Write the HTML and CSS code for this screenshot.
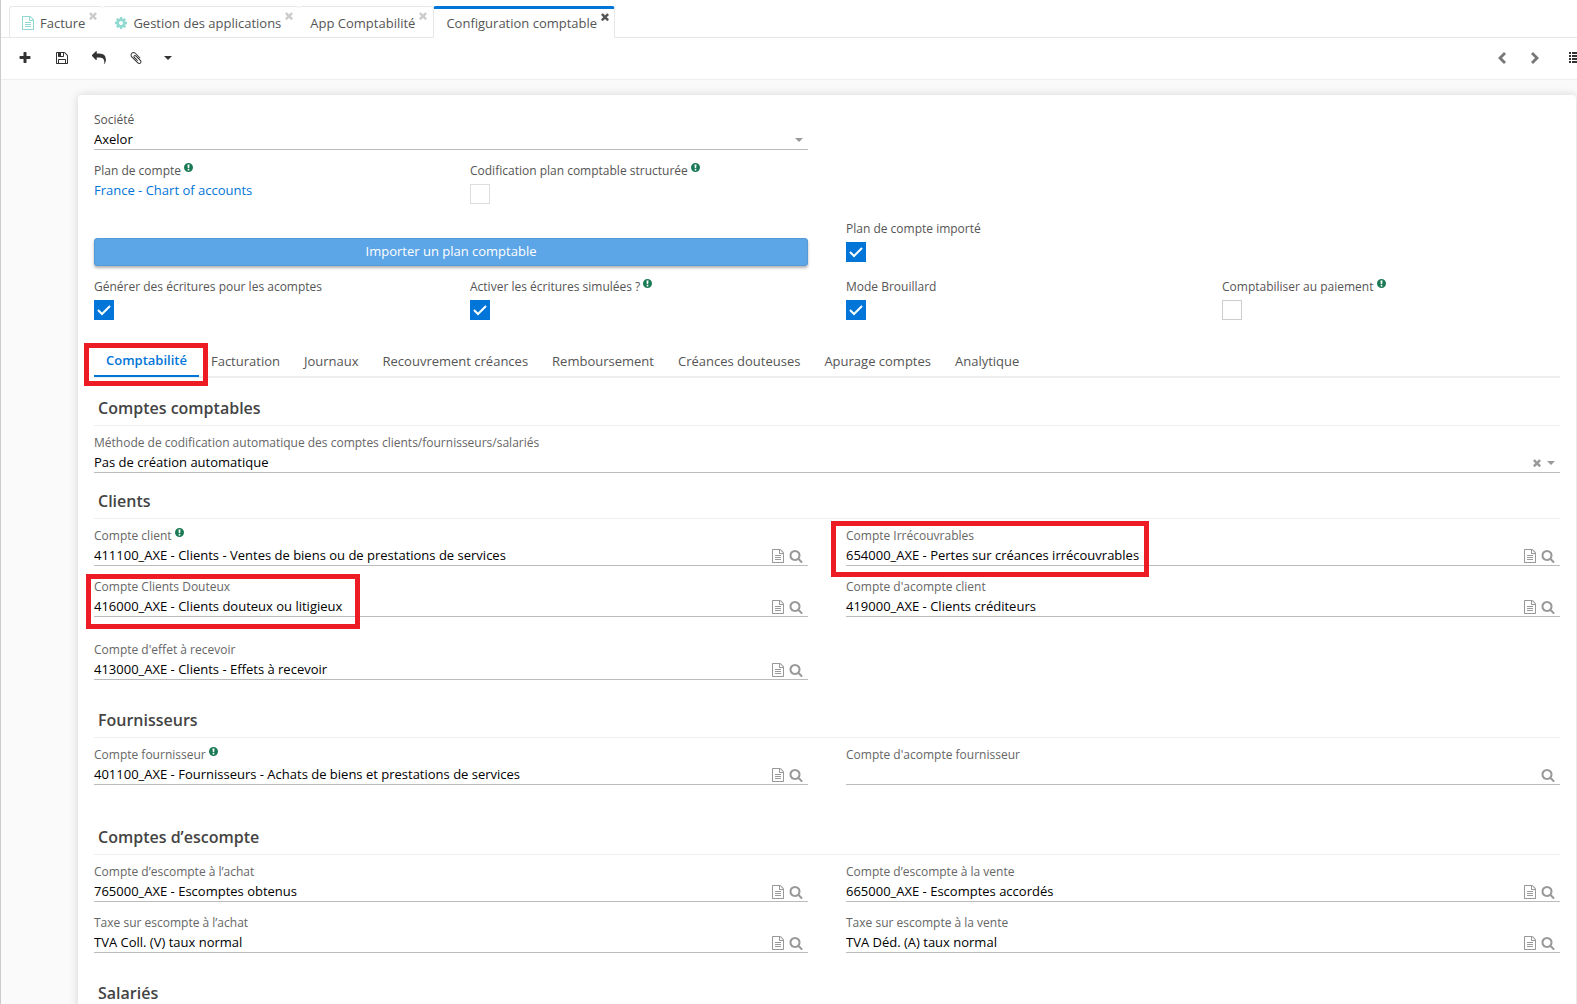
FILE: index.html
```html
<!DOCTYPE html>
<html lang="fr">
<head>
<meta charset="utf-8">
<title>Configuration comptable</title>
<link rel="stylesheet" href="styles.css">
</head>
<body>
<svg class="sprite" aria-hidden="true">
  <symbol id="plus" viewBox="0 0 1792 1792"><path d="M1600 736v192q0 40-28 68t-68 28h-416v416q0 40-28 68t-68 28h-192q-40 0-68-28t-28-68v-416h-416q-40 0-68-28t-28-68v-192q0-40 28-68t68-28h416v-416q0-40 28-68t68-28h192q40 0 68 28t28 68v416h416q40 0 68 28t28 68z"/></symbol>
  <symbol id="save" viewBox="0 0 1792 1792"><path d="M512 1536h768v-384h-768v384zm896 0h128v-896q0-14-10-38.500t-20-34.500l-281-281q-10-10-34-20t-39-10v416q0 40-28 68t-68 28h-576q-40 0-68-28t-28-68v-416h-128v1280h128v-416q0-40 28-68t68-28h832q40 0 68 28t28 68v416zm-384-928v-320q0-13-9.500-22.500t-22.500-9.500h-192q-13 0-22.500 9.500t-9.500 22.500v320q0 13 9.500 22.500t22.500 9.500h192q13 0 22.500-9.500t9.500-22.500zm640 32v928q0 40-28 68t-68 28h-1344q-40 0-68-28t-28-68v-1344q0-40 28-68t68-28h928q40 0 88 20t76 48l280 280q28 28 48 76t20 88z"/></symbol>
  <symbol id="reply" viewBox="0 0 1792 1792"><path d="M1792 1120q0 166-127 451-3 7-10.500 24t-13.500 30-13 22q-12 17-28 17-15 0-23.500-10t-8.500-25q0-9 2.500-26.500t2.500-23.500q5-68 5-123 0-112-19.500-200.500t-54-153.500-89-112-118-78.500-140-44.500-156.500-20.500-170-6.500h-224v256q0 26-19 45t-45 19-45-19l-512-512q-19-19-19-45t19-45l512-512q19-19 45-19t45 19 19 45v256h224q713 0 875 403 53 134 53 333z"/></symbol>
  <symbol id="clip" viewBox="0 0 1792 1792"><path d="M1596 1385q0 117-79 196t-196 79q-135 0-235-100l-777-776q-113-115-113-271 0-159 110-270t269-111q158 0 273 113l605 606q10 10 10 22 0 16-30.500 46.500t-46.500 30.500q-13 0-23-10l-606-607q-79-77-181-77-106 0-179 75t-73 181q0 105 76 181l776 777q63 63 145 63 64 0 106-42t42-106q0-82-63-145l-581-581q-26-24-60-24-29 0-48 19t-19 48q0 32 25 59l410 410q10 10 10 22 0 16-31 47t-47 31q-12 0-22-10l-410-410q-63-61-63-149 0-82 57-139t139-57q88 0 149 63l581 581q100 98 100 235z"/></symbol>
  <symbol id="file" viewBox="0 0 1792 1792"><path d="M1596 380q28 28 48 76t20 88v1152q0 40-28 68t-68 28h-1344q-40 0-68-28t-28-68v-1600q0-40 28-68t68-28h896q40 0 88 20t76 48zm-444-244v376h376q-10-29-22-41l-313-313q-12-12-41-22zm384 1528v-1024h-416q-40 0-68-28t-28-68v-416h-768v1536h1280zm-1024-864q0-14 9-23t23-9h704q14 0 23 9t9 23v64q0 14-9 23t-23 9h-704q-14 0-23-9t-9-23v-64zm736 224q14 0 23 9t9 23v64q0 14-9 23t-23 9h-704q-14 0-23-9t-9-23v-64q0-14 9-23t23-9h704zm0 256q14 0 23 9t9 23v64q0 14-9 23t-23 9h-704q-14 0-23-9t-9-23v-64q0-14 9-23t23-9h704z"/></symbol>
  <symbol id="search" viewBox="0 0 1792 1792"><path d="M1216 832q0-185-131.500-316.500t-316.500-131.500-316.500 131.500-131.500 316.500 131.500 316.500 316.500 131.500 316.500-131.500 131.500-316.500zm512 832q0 52-38 90t-90 38q-54 0-90-38l-343-342q-179 124-399 124-143 0-273.500-55.500t-225-150-150-225-55.500-273.500 55.500-273.500 150-225 225-150 273.500-55.500 273.500 55.500 225 150 150 225 55.500 273.500q0 220-124 399l343 343q37 37 37 90z"/></symbol>
  <symbol id="cog" viewBox="0 0 1792 1792"><path d="M1152 896q0-106-75-181t-181-75-181 75-75 181 75 181 181 75 181-75 75-181zm512-109v222q0 12-8 23t-20 13l-185 28q-19 54-39 91 35 50 107 138 10 12 10 25t-9 23q-27 37-99 108t-94 71q-12 0-26-9l-138-108q-44 23-91 38-16 136-29 186-7 28-36 28h-222q-14 0-24.500-8.500t-11.500-21.500l-28-184q-49-16-90-37l-141 107q-10 9-25 9-14 0-25-11-126-114-165-168-7-10-7-23 0-12 8-23 15-21 51-66.500t54-70.500q-27-50-41-99l-183-27q-13-2-21-12.500t-8-23.500v-222q0-12 8-23t19-13l186-28q14-46 39-92-40-57-107-138-10-12-10-24 0-10 9-23 26-36 98.500-107.500t94.500-71.500q13 0 26 10l138 107q44-23 91-38 16-136 29-186 7-28 36-28h222q14 0 24.500 8.500t11.500 21.500l28 184q49 16 90 37l142-107q9-9 24-9 13 0 25 10 129 119 165 170 7 8 7 22 0 12-8 23-15 21-51 66.500t-54 70.500q26 50 41 98l183 28q13 2 21 12.500t8 23.500z"/></symbol>
  <symbol id="times" viewBox="302 302 1188 1252"><path d="M1490 1322q0 40-28 68l-136 136q-28 28-68 28t-68-28l-294-294-294 294q-28 28-68 28t-68-28l-136-136q-28-28-28-68t28-68l294-294-294-294q-28-28-28-68t28-68l136-136q28-28 68-28t68 28l294 294 294-294q28-28 68-28t68 28l136 136q28 28 28 68t-28 68l-294 294 294 294q28 28 28 68z"/></symbol>
  <symbol id="caret" viewBox="0 0 8 4"><path d="M0 0h8L4 4z"/></symbol>
  <symbol id="help" viewBox="0 0 18 18"><path fill-rule="evenodd" d="M9 0a9 9 0 1 1 0 18A9 9 0 0 1 9 0zM7 3l.6 7.400h2.800L11 3zM7.400 12v3h3.200v-3z"/></symbol>
  <symbol id="prev" viewBox="0 0 8 12"><path d="M6 0l2 2-4 4 4 4-2 2-6-6z"/></symbol>
  <symbol id="next" viewBox="0 0 8 12"><path d="M2 0L0 2l4 4-4 4 2 2 6-6z"/></symbol>
  <symbol id="list" viewBox="0 0 14 12"><path d="M0 0h2v2H0zM3 0h11v2H3zM0 3h2v2H0zM3 3h11v2H3zM0 6h2v2H0zM3 6h11v2H3zM0 9h2v2H0zM3 9h11v2H3z"/></symbol>
</svg>

<div class="app">
  <nav class="view-tabs" aria-label="Vues ouvertes">
    <div class="view-tab"><svg class="icon teal"><use href="#file"/></svg><a href="#">Facture</a><button class="close" type="button" aria-label="Fermer"><svg><use href="#times"/></svg></button></div>
    <div class="view-tab"><svg class="icon teal"><use href="#cog"/></svg><a href="#">Gestion des applications</a><button class="close" type="button" aria-label="Fermer"><svg><use href="#times"/></svg></button></div>
    <div class="view-tab"><a href="#">App Comptabilité</a><button class="close" type="button" aria-label="Fermer"><svg><use href="#times"/></svg></button></div>
    <div class="view-tab current"><a href="#">Configuration comptable</a><button class="close" type="button" aria-label="Fermer"><svg><use href="#times"/></svg></button></div>
  </nav>

  <div class="toolbar">
    <button type="button" aria-label="Nouveau"><svg class="icon"><use href="#plus"/></svg></button>
    <button type="button" aria-label="Enregistrer"><svg class="icon"><use href="#save"/></svg></button>
    <button type="button" aria-label="Annuler"><svg class="icon"><use href="#reply"/></svg></button>
    <button type="button" aria-label="Pièces jointes"><svg class="icon"><use href="#clip"/></svg></button>
    <button class="more" type="button" aria-label="Plus d'actions"><svg class="caret"><use href="#caret"/></svg></button>
    <div class="pager">
      <button type="button" aria-label="Précédent"><svg class="chevron"><use href="#prev"/></svg></button>
      <button type="button" aria-label="Suivant"><svg class="chevron"><use href="#next"/></svg></button>
      <button class="list" type="button" aria-label="Liste"><svg class="rows"><use href="#list"/></svg></button>
    </div>
  </div>

  <main class="content">
    <form class="card">
      <div class="grid quarters">
        <div class="field half">
          <label for="societe">Société</label>
          <div class="control"><select id="societe"><option>Axelor</option></select><svg class="caret"><use href="#caret"/></svg></div>
        </div>
        <div class="field first">
          <span class="label">Plan de compte<svg class="help"><use href="#help"/></svg></span>
          <a class="link" href="#">France - Chart of accounts</a>
        </div>
        <div class="check">
          <label for="codif">Codification plan comptable structurée<svg class="help"><use href="#help"/></svg></label>
          <input type="checkbox" id="codif" disabled>
        </div>
        <button class="primary" type="button">Importer un plan comptable</button>
        <div class="check">
          <label for="importe">Plan de compte importé</label>
          <input type="checkbox" id="importe" checked>
        </div>
        <div class="check first">
          <label for="acomptes">Générer des écritures pour les acomptes</label>
          <input type="checkbox" id="acomptes" checked>
        </div>
        <div class="check">
          <label for="simulees">Activer les écritures simulées ?<svg class="help"><use href="#help"/></svg></label>
          <input type="checkbox" id="simulees" checked>
        </div>
        <div class="check">
          <label for="brouillard">Mode Brouillard</label>
          <input type="checkbox" id="brouillard" checked>
        </div>
        <div class="check">
          <label for="paiement">Comptabiliser au paiement<svg class="help"><use href="#help"/></svg></label>
          <input type="checkbox" id="paiement">
        </div>
      </div>

      <div class="tabs" role="tablist">
        <button type="button" role="tab" class="active" aria-selected="true">Comptabilité<span class="mark mark-tab"></span></button>
        <button type="button" role="tab">Facturation</button>
        <button type="button" role="tab">Journaux</button>
        <button type="button" role="tab">Recouvrement créances</button>
        <button type="button" role="tab">Remboursement</button>
        <button type="button" role="tab">Créances douteuses</button>
        <button type="button" role="tab">Apurage comptes</button>
        <button type="button" role="tab">Analytique</button>
      </div>

      <section class="panel">
        <h2>Comptes comptables</h2>
        <div class="field">
          <label for="methode">Méthode de codification automatique des comptes clients/fournisseurs/salariés</label>
          <div class="control"><select id="methode"><option>Pas de création automatique</option></select><button class="clear" type="button" aria-label="Effacer"><svg><use href="#times"/></svg></button><svg class="caret"><use href="#caret"/></svg></div>
        </div>
      </section>

      <section class="panel">
        <h2>Clients</h2>
        <div class="grid halves">
          <div class="field">
            <label for="client">Compte client<svg class="help"><use href="#help"/></svg></label>
            <div class="control"><input type="text" id="client" value="411100_AXE - Clients - Ventes de biens ou de prestations de services"><button type="button" aria-label="Ouvrir"><svg class="icon"><use href="#file"/></svg></button><button type="button" aria-label="Rechercher"><svg class="icon"><use href="#search"/></svg></button></div>
          </div>
          <div class="field">
            <label for="irrecouvrables">Compte Irrécouvrables</label>
            <div class="control"><input type="text" id="irrecouvrables" value="654000_AXE - Pertes sur créances irrécouvrables"><button type="button" aria-label="Ouvrir"><svg class="icon"><use href="#file"/></svg></button><button type="button" aria-label="Rechercher"><svg class="icon"><use href="#search"/></svg></button></div>
            <span class="mark mark-losses"></span>
          </div>
          <div class="field">
            <label for="douteux">Compte Clients Douteux</label>
            <div class="control"><input type="text" id="douteux" value="416000_AXE - Clients douteux ou litigieux"><button type="button" aria-label="Ouvrir"><svg class="icon"><use href="#file"/></svg></button><button type="button" aria-label="Rechercher"><svg class="icon"><use href="#search"/></svg></button></div>
            <span class="mark mark-doubtful"></span>
          </div>
          <div class="field">
            <label for="acompte-client">Compte d'acompte client</label>
            <div class="control"><input type="text" id="acompte-client" value="419000_AXE - Clients créditeurs"><button type="button" aria-label="Ouvrir"><svg class="icon"><use href="#file"/></svg></button><button type="button" aria-label="Rechercher"><svg class="icon"><use href="#search"/></svg></button></div>
          </div>
          <div class="field spaced">
            <label for="effet">Compte d'effet à recevoir</label>
            <div class="control"><input type="text" id="effet" value="413000_AXE - Clients - Effets à recevoir"><button type="button" aria-label="Ouvrir"><svg class="icon"><use href="#file"/></svg></button><button type="button" aria-label="Rechercher"><svg class="icon"><use href="#search"/></svg></button></div>
          </div>
        </div>
      </section>

      <section class="panel apart">
        <h2>Fournisseurs</h2>
        <div class="grid halves">
          <div class="field">
            <label for="fournisseur">Compte fournisseur<svg class="help"><use href="#help"/></svg></label>
            <div class="control"><input type="text" id="fournisseur" value="401100_AXE - Fournisseurs - Achats de biens et prestations de services"><button type="button" aria-label="Ouvrir"><svg class="icon"><use href="#file"/></svg></button><button type="button" aria-label="Rechercher"><svg class="icon"><use href="#search"/></svg></button></div>
          </div>
          <div class="field">
            <label for="acompte-fournisseur">Compte d'acompte fournisseur</label>
            <div class="control"><input type="text" id="acompte-fournisseur"><button type="button" aria-label="Rechercher"><svg class="icon"><use href="#search"/></svg></button></div>
          </div>
        </div>
      </section>

      <section class="panel far">
        <h2>Comptes d’escompte</h2>
        <div class="grid halves">
          <div class="field">
            <label for="escompte-achat">Compte d’escompte à l’achat</label>
            <div class="control"><input type="text" id="escompte-achat" value="765000_AXE - Escomptes obtenus"><button type="button" aria-label="Ouvrir"><svg class="icon"><use href="#file"/></svg></button><button type="button" aria-label="Rechercher"><svg class="icon"><use href="#search"/></svg></button></div>
          </div>
          <div class="field">
            <label for="escompte-vente">Compte d’escompte à la vente</label>
            <div class="control"><input type="text" id="escompte-vente" value="665000_AXE - Escomptes accordés"><button type="button" aria-label="Ouvrir"><svg class="icon"><use href="#file"/></svg></button><button type="button" aria-label="Rechercher"><svg class="icon"><use href="#search"/></svg></button></div>
          </div>
          <div class="field">
            <label for="taxe-achat">Taxe sur escompte à l’achat</label>
            <div class="control"><input type="text" id="taxe-achat" value="TVA Coll. (V) taux normal"><button type="button" aria-label="Ouvrir"><svg class="icon"><use href="#file"/></svg></button><button type="button" aria-label="Rechercher"><svg class="icon"><use href="#search"/></svg></button></div>
          </div>
          <div class="field">
            <label for="taxe-vente">Taxe sur escompte à la vente</label>
            <div class="control"><input type="text" id="taxe-vente" value="TVA Déd. (A) taux normal"><button type="button" aria-label="Ouvrir"><svg class="icon"><use href="#file"/></svg></button><button type="button" aria-label="Rechercher"><svg class="icon"><use href="#search"/></svg></button></div>
          </div>
        </div>
      </section>

      <section class="panel apart">
        <h2>Salariés</h2>
      </section>
    </form>
  </main>
</div>
</body>
</html>
```

FILE: styles.css
```css
* {
  box-sizing: border-box;
}

body {
  margin: 0;
  font-family: "Open Sans", "Noto Sans", sans-serif;
  font-size: 13px;
  line-height: 20px;
  color: #555;
}

button,
input,
select {
  margin: 0;
  padding: 0;
  border: 0;
  background: none;
  font: inherit;
  color: inherit;
}

button {
  display: flex;
  align-items: center;
  justify-content: center;
}

a {
  color: inherit;
  text-decoration: none;
}

svg {
  display: block;
  flex: none;
  fill: currentColor;
}

.sprite {
  display: none;
}

.icon {
  width: 14px;
  height: 14px;
}

.caret {
  width: 8px;
  height: 4px;
}

.app {
  display: flex;
  flex-direction: column;
  height: 100vh;
  overflow: hidden;
  border-left: 1px solid #ccc;
  background: #fff;
}

/* Open views */
.view-tabs {
  display: flex;
  flex: none;
  height: 38px;
  padding: 6px 8px 0;
  border-bottom: 1px solid #e7e7e7;
}

.view-tab {
  display: flex;
  align-items: center;
  height: 31px;
  padding: 1px 6px 0 11px;
  border-top: 1px solid #e7e7e7;
  border-radius: 3px 3px 0 0;
}

.view-tab:first-child {
  border-left: 1px solid #e7e7e7;
}

.view-tab .icon {
  margin-right: 5px;
}

.teal {
  color: #8fd9d0;
}

.close {
  align-self: flex-start;
  margin: 4px 0 0 4px;
  color: #ccc;
}

.close svg,
.clear svg {
  width: 8px;
  height: 8px;
}

.view-tabs .current {
  height: 32px;
  padding: 0 5px 2px 12px;
  border: 1px solid #e7e7e7;
  border-top: 3px solid #0275d8;
  border-bottom: 0;
  background: #fff;
}

.current .close {
  color: #555;
}

/* Form actions */
.toolbar {
  display: flex;
  flex: none;
  align-items: center;
  height: 42px;
  padding: 0 0 2px 5px;
  border-bottom: 1px solid #eee;
  color: #333;
}

.toolbar button {
  width: 37px;
  height: 28px;
}

.toolbar .more {
  width: 28px;
}

.pager {
  display: flex;
  flex: none;
  margin-left: auto;
  margin-right: -6px;
  color: #777;
}

.toolbar .pager button {
  width: 33px;
}

.toolbar .pager .list {
  width: 32px;
  justify-content: flex-end;
  color: #333;
}

.chevron {
  width: 8px;
  height: 12px;
}

.rows {
  width: 14px;
  height: 12px;
}

/* Form */
.content {
  flex: 1;
  min-height: 0;
  padding: 15px 1px 0 77px;
  overflow: hidden;
  background: #fafafa;
}

.card {
  padding: 15px 16px 40px;
  border-radius: 4px;
  background: #fff;
  box-shadow: 0 0 10px rgba(0, 0, 0, 0.15);
}

.grid {
  display: grid;
  gap: 11px 38px;
}

.quarters {
  grid-template-columns: repeat(4, minmax(0, 1fr));
}

.halves {
  grid-template-columns: repeat(2, minmax(0, 1fr));
}

.half {
  grid-column: span 2;
}

.first {
  grid-column-start: 1;
}

.field {
  position: relative;
}

label,
.label {
  display: flex;
  height: 20px;
  font-size: 12px;
  color: #555;
}

.panel label {
  color: #666;
}

.help {
  width: 9px;
  height: 9px;
  margin: 2px 0 0 3px;
  color: #1a7a55;
}

.control {
  display: flex;
  align-items: center;
  gap: 4px;
  height: 20px;
  padding-right: 5px;
  border-bottom: 1px solid #bbb;
  color: #999;
}

.control input,
.control select {
  flex: 1;
  min-width: 0;
  height: 19px;
  line-height: 19px;
  color: #000;
  appearance: none;
  outline: 0;
}

.clear {
  padding-right: 2px;
}

.link {
  display: block;
  line-height: 18px;
  color: #0275d8;
}

.check {
  padding-bottom: 4px;
}

.check input {
  display: block;
  width: 20px;
  height: 20px;
  margin-top: 3px;
  border: 1px solid #ccc;
  background: #fff;
  appearance: none;
}

.check input:disabled {
  border-color: #ddd;
}

.check input:checked {
  border: 0;
  background: #0275d8 url("data:image/svg+xml,%3Csvg xmlns='http://www.w3.org/2000/svg' viewBox='0 0 20 20'%3E%3Cpath d='M4 10l4 4 8-8' fill='none' stroke='%23fff' stroke-width='2'/%3E%3C/svg%3E");
}

.primary {
  grid-column: 1 / span 2;
  align-self: end;
  height: 28px;
  padding-bottom: 2px;
  border: 1px solid #5599d6;
  border-radius: 3px;
  background: #5ca5e7;
  color: #fff;
  font-weight: 500;
  box-shadow: 0 2px 3px rgba(0, 0, 0, 0.3);
}

/* Notebook */
.tabs {
  display: flex;
  height: 33px;
  margin: 21px 0 13px;
  border-bottom: 2px solid #eee;
}

.tabs button {
  height: 32px;
  padding: 0 12px;
}

.tabs .active {
  position: relative;
  border-bottom: 2px solid #0275d8;
  color: #0275d8;
  font-weight: 600;
}

.panel {
  margin-top: 11px;
}

.apart {
  margin-top: 23px;
}

.far {
  margin-top: 35px;
}

.spaced {
  margin-top: 12px;
}

h2 {
  margin: 0 0 7px;
  padding: 0 4px;
  border-bottom: 1px solid #eee;
  font-size: 16px;
  line-height: 34px;
  font-weight: 600;
  color: #444;
}

/* Red frames drawn over the elements to look at */
.mark {
  position: absolute;
  z-index: 1;
  border: 5px solid #ed1c24;
  pointer-events: none;
}

.mark-tab {
  inset: -2px -9px -11px -10px;
}

.mark-losses {
  top: -5px;
  left: -15px;
  width: 318px;
  height: 56px;
}

.mark-doubtful {
  top: -3px;
  left: -8px;
  width: 274px;
  height: 55px;
}
```
